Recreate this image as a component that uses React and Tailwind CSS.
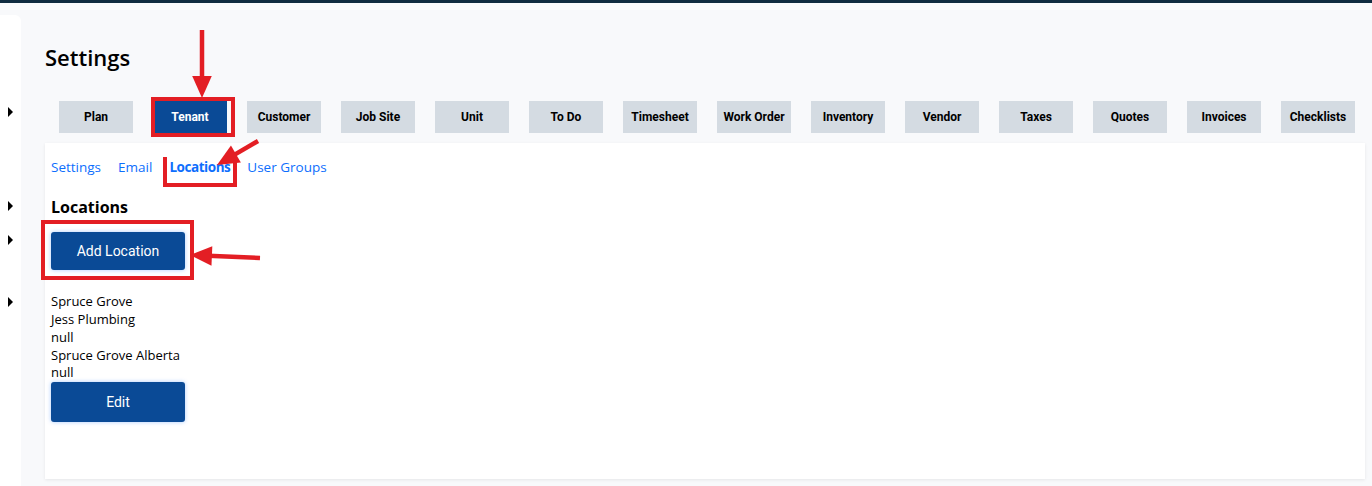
import React from 'react';

const TABS = ['Plan', 'Tenant', 'Customer', 'Job Site', 'Unit', 'To Do', 'Timesheet', 'Work Order', 'Inventory', 'Vendor', 'Taxes', 'Quotes', 'Invoices', 'Checklists'];
const SUB_TABS = ['Settings', 'Email', 'Locations', 'User Groups'];
const LOCATION_LINES = ['Spruce Grove', 'Jess Plumbing', 'null', 'Spruce Grove Alberta', 'null'];

const body = { fontFamily: '"Open Sans", "Noto Sans", sans-serif' };
const roboto = { fontFamily: 'Roboto, "Liberation Sans", sans-serif' };

function Caret({ className = '' }) {
  return <span className={`block w-0 h-0 border-y-[5px] border-y-transparent border-l-[5px] border-l-black ${className}`} />;
}

// red pointer arrow used for the help annotations
function Arrow({ x1, y1, x2, y2 }) {
  const angle = Math.atan2(y2 - y1, x2 - x1);
  const len = 24;
  const spread = 0.42;
  const ax = x2 - len * Math.cos(angle - spread);
  const ay = y2 - len * Math.sin(angle - spread);
  const bx = x2 - len * Math.cos(angle + spread);
  const by = y2 - len * Math.sin(angle + spread);
  const sx = x2 - 18 * Math.cos(angle);
  const sy = y2 - 18 * Math.sin(angle);
  return (
    <g>
      <line x1={x1} y1={y1} x2={sx} y2={sy} stroke="#e31e24" strokeWidth="4.5" />
      <polygon points={`${x2},${y2} ${ax},${ay} ${bx},${by}`} fill="#e31e24" />
    </g>
  );
}

export default function App() {
  return (
    <div className="relative w-[1372px] h-[486px] overflow-hidden bg-[#f8f9fb]" style={body}>
      <div className="h-[3px] bg-[#0f2b40]" />

      <div className="flex">
        {/* collapsed side nav */}
        <div className="mt-[12px] w-[21px] h-[472px] bg-white rounded-tr-md flex flex-col items-start pl-[8px] pt-[92px]">
          <Caret />
          <Caret className="mt-[84px]" />
          <Caret className="mt-[24px]" />
          <Caret className="mt-[52px]" />
        </div>

        <div className="flex-1 pl-[24px] pr-[7px]">
          <h1 className="mt-[40px] text-[22px] font-semibold text-black leading-[28px]">Settings</h1>

          <div className="flex gap-[20px] pl-[14px] mt-[30px]">
            {TABS.map((tab) => (
              <div
                key={tab}
                style={roboto}
                className={`w-[74px] h-[32px] flex items-center justify-center text-[12px] font-bold ${
                  tab === 'Tenant' ? 'bg-[#0a4a96] text-white' : 'bg-[#d4dbe2] text-black'
                }`}
              >
                {tab}
              </div>
            ))}
          </div>

          <div className="mt-[10px] h-[336px] bg-white shadow-[0_1px_3px_rgba(0,0,0,0.08)] px-[6px] pt-[14px]">
            <div className="flex gap-[17px] text-[13.5px] text-[#0d6efd]">
              {SUB_TABS.map((t) => (
                <span key={t} className={t === 'Locations' ? 'font-bold tracking-[-0.45px]' : ''}>{t}</span>
              ))}
            </div>

            <h2 className="mt-[20px] text-[16px] font-bold text-black leading-[20px]">Locations</h2>

            <button
              style={roboto}
              className="mt-[15px] w-[134px] h-[38px] rounded-[3px] bg-[#0a4a96] text-white text-[14px] shadow-[0_0_4px_rgba(13,110,253,0.35)]"
            >
              Add Location
            </button>

            <div className="mt-[23px] text-[13px] text-black leading-[17.75px]">
              {LOCATION_LINES.map((line, i) => (
                <div key={i}>{line}</div>
              ))}
            </div>

            <button
              style={roboto}
              className="w-[134px] h-[40px] rounded-[3px] bg-[#0a4a96] text-white text-[14px] shadow-[0_0_4px_rgba(13,110,253,0.35)]"
            >
              Edit
            </button>
          </div>
        </div>
      </div>

      {/* annotation boxes */}
      <div className="absolute left-[151px] top-[97px] w-[84px] h-[40px] border-4 border-[#e31e24]" />
      <div className="absolute left-[163px] top-[157px] w-[74px] h-[30px] border-4 border-[#e31e24] border-t-0" />
      <div className="absolute left-[41px] top-[220px] w-[153px] h-[60px] border-4 border-[#e31e24]" />

      <svg className="absolute inset-0 pointer-events-none" width="1372" height="486">
        <Arrow x1={202} y1={30} x2={202} y2={98} />
        <Arrow x1={258} y1={141} x2={217} y2={165} />
        <Arrow x1={260} y1={258} x2={190} y2={255} />
      </svg>
    </div>
  );
}
